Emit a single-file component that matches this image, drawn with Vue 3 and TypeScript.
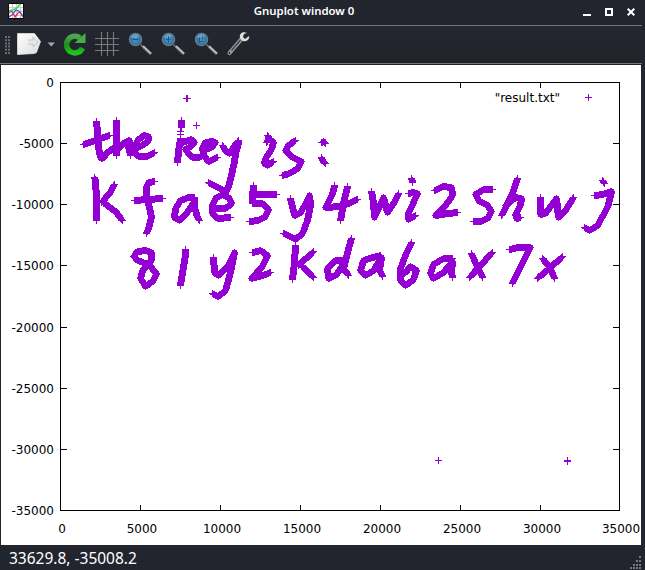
<script setup lang="ts">
type Point = [number, number]

// Pen strokes of the plotted series, in canvas pixels: "x,y x,y ..."
const strokes: string[] = [
  // the
  '96,121 97,132 98,147 100,157 102,158 107,152 115,146',
  '83,144 92,141 100,138 109,135',
  '116,120 116,137 116,155',
  '116,150 124,142 129,140 128,147 130,155',
  '134,148 142,145 148,140 148,136 143,135 137,140 134,147 134,152 138,156 147,156 154,152',
  // key
  '181,120 181,127', '180,131 180,131', '180,134 180,134', '180,138 178,150 177,162',
  '182,142 191,139 194,142 190,146 185,149 188,153 192,157 198,157 203,155',
  '203,149 211,147 215,142 212,141 205,142 202,147 203,155 208,161 217,157',
  '222,145 225,150 229,153 233,147 238,140',
  '238,140 238,143 235,153 234,161 232,170 229,183 226,191 220,188 208,182',
  // is:
  '267,135 269,138', '266,142 268,138 273,142 271,149 265,158 264,163 267,165 273,161',
  '295,140 288,145 285,150 291,156 301,161 297,168 289,173 282,175',
  '321,142 323,141 325,143', '321,157 322,160 325,163',
  // kfae5y4
  '94,177 95,180 96,200 96,220', '114,184 109,193 101,202', '103,202 115,211 122,220',
  '154,181 148,182 146,187 146,198 149,207 151,217 148,228 146,233', '134,200 147,199 162,198',
  '194,197 188,197 180,200 175,208 174,217 179,220 186,213 194,201',
  '194,197 194,207 197,217 199,220',
  '213,208 225,208 231,203 229,198 222,194 215,198 212,205 212,213 217,218 230,217',
  '253,185 252,195 252,203', '254,194 276,194',
  '253,203 262,203 268,209 265,216 257,220 249,221',
  '290,198 292,207 294,215 300,212 306,202 309,195 310,205 307,220 302,233 295,239 290,236 283,233',
  '334,185 332,193 325,207 340,206 348,203 357,199', '347,186 343,202 340,220',
  // wi25hwj
  '371,191 373,203 374,217 383,197 387,212 393,203 398,193',
  '411,178 412,182', '408,193 412,192 417,193 413,202 408,213 408,219 415,215',
  '434,190 442,186 451,187 452,195 445,205 435,215 447,213 457,212',
  '492,189 483,189 475,194 478,200 487,205 491,211 487,218 480,221 473,221',
  '517,178 513,190 507,203 501,215', '505,205 515,197 521,198 520,204 515,214 516,218 520,217',
  '540,197 540,214 545,213 556,198 558,217 565,210 573,197',
  '602,180 604,183', '594,195 602,194 611,191 607,207 597,225 589,230 584,227',
  // 81y2k
  '133,256 137,251 145,250 151,252 151,260 142,270 140,278 145,286 152,281 156,273 148,264 137,260 133,256',
  '185,249 185,254 180,285',
  '213,257 214,272 218,275 227,266 234,252 230,272 225,290 218,296 212,293',
  '252,252 260,250 267,255 261,267 251,278 262,275 270,272',
  '295,245 294,262 292,279', '295,239 295,239', '313,251 298,265', '301,265 313,277',
  // da6
  '351,238 347,252 343,268 348,275', '343,260 335,260 327,268 328,278 336,274 344,262',
  '380,255 372,257 363,260 360,270 365,275 373,270 381,257 379,270 382,276',
  '411,242 405,255 400,268 400,280 405,285 413,279 416,270 410,266 403,274',
  // ax7x
  '452,258 443,258 433,264 430,273 433,278 443,272 452,261 451,272 452,277',
  '471,253 477,267 482,277', '492,252 478,267 469,277',
  '509,249 518,247 530,247 523,260 512,283',
  '542,258 550,268 554,278', '562,256 550,267 537,278',
  // stray samples
  '186,98 187,98', '196,125 196,125', '438,460 438,460', '567,460 567,461',
]

function plus([x, y]: Point): string {
  return `M${x - 3} ${y + 0.5}h7M${x + 0.5} ${y - 3}v7`
}

// Overlapping neighbours of a dense sample fill the middle of its marker
function core([x, y]: Point): string {
  return `M${x - 2} ${y - 1.5}h5M${x - 2} ${y - 0.5}h5M${x - 2} ${y + 1.5}h5M${x - 2} ${y + 2.5}h5`
}

function sample(stroke: string): Point[] {
  const nodes = stroke.split(' ').map((p) => p.split(',').map(Number) as Point)
  const out: Point[] = []
  for (let i = 1; i < nodes.length; i++) {
    const [x0, y0] = nodes[i - 1]
    const [x1, y1] = nodes[i]
    const n = Math.max(1, Math.abs(x1 - x0), Math.abs(y1 - y0))
    for (let k = 0; k <= n; k++) {
      out.push([Math.round(x0 + ((x1 - x0) * k) / n), Math.round(y0 + ((y1 - y0) * k) / n)])
    }
  }
  return out
}

const series = strokes
  .map(sample)
  .map((points) => points.map(plus).join('') + points.slice(2, -2).map(core).join(''))
  .join('')
const key = plus([588, 97])
const xTicks = Array.from({ length: 8 }, (_, i) => ({ label: String(i * 5000), x: Math.min(60.5 + i * 80, 619.5) }))
const yTicks = Array.from({ length: 8 }, (_, i) => ({ label: String(i === 0 ? 0 : -i * 5000), y: 82.5 + Math.round((i * 428) / 7) }))
const grip: Point[] = [[9, 0], [9, 4], [6, 4], [9, 8], [6, 8], [3, 8], [9, 11], [6, 11], [3, 11], [0, 11]]
const lenses = ['M-3 0h6', 'M-2 0h4M0-3v6', 'M-2-2v5M1-3v3M-1 2h3']
</script>

<template>
  <div class="window">
    <header class="titlebar">
      <svg class="app-icon" width="16" height="16" viewBox="0 0 16 16">
        <rect x=".5" y=".5" width="15" height="15" fill="#fff" stroke="#080808" />
        <path d="M4.5 1v14M8.5 1v14M12.5 1v14M1 4.5h14M1 8.5h14M1 12.5h14" stroke="#ccc" />
        <path d="M1 10l2-2 2 2 2 4 3-4 2-1 3 5" fill="none" stroke="#ef3030" stroke-width="1.3" />
        <path d="M1 14l4-3 3-4 3 1 4 5" fill="none" stroke="#4050ef" stroke-width="1.2" />
        <path d="M1 8l4-1 4-2 3-4" fill="none" stroke="#2bdf55" stroke-width="1.4" />
      </svg>
      <h1>Gnuplot window 0</h1>
      <div class="controls">
        <svg width="8" height="10"><path d="M0 9h8" stroke="#fff" stroke-width="2" /></svg>
        <svg width="8" height="10"><rect x="1" y="3" width="6" height="6" fill="none" stroke="#fff" stroke-width="2" /></svg>
        <svg width="8" height="10"><path d="M.7 2.7l6.6 6.6M7.3 2.7L.7 9.3" stroke="#fff" stroke-width="2" /></svg>
      </div>
    </header>

    <nav class="toolbar">
      <svg width="250" height="37" viewBox="0 0 250 37">
        <defs>
          <linearGradient id="page" x1="0" y1="0" x2="1" y2="1">
            <stop offset="0" stop-color="#fff" /><stop offset="1" stop-color="#dcdcdc" />
          </linearGradient>
          <linearGradient id="green" x1="0" y1="0" x2="0" y2="1">
            <stop offset="0" stop-color="#4fa650" /><stop offset=".5" stop-color="#188d1a" /><stop offset="1" stop-color="#20c51b" />
          </linearGradient>
          <radialGradient id="glass">
            <stop offset="0" stop-color="#4f96c8" /><stop offset="1" stop-color="#2d6c9e" />
          </radialGradient>
        </defs>
        <path d="M6 10v18M9 10v18" stroke="#696c72" stroke-width="2" stroke-dasharray="2 1.2" />
        <path d="M17.5 7.5h17l6 8-4 11-2 1-17 1z" fill="url(#page)" stroke="#eee" stroke-width=".7" />
        <path d="M28 14h5v-3l5 5-5 5v-3h-5" fill="#e8e8e8" stroke="#bbb" stroke-width=".8" />
        <path d="M47.5 16.5h7.5l-3.7 4z" fill="#a6a7aa" />
        <path d="M82.5 22a8.300 8.300 0 1 1-2.500-10" fill="none" stroke="url(#green)" stroke-width="5.5" />
        <path d="M85.5 7v10h-11z" fill="#45ae45" />
        <path d="M101.5 6v24M107.5 6v24M113.5 6v24M95 12.5h24M95 18.5h24M95 24.5h24" stroke="#777a7c" stroke-width="1.1" />
        <g v-for="(sign, i) in lenses" :key="i" :transform="`translate(${135.5 + i * 33} 13.5)`">
          <path d="M5 5l3 3" stroke="#777" stroke-width="1.5" />
          <path d="M7.5 7l8 7.5" stroke="#858585" stroke-width="3" />
          <path d="M7.5 6.5l8 7.5" stroke="#c6c6c6" stroke-width="1.2" />
          <circle r="6.2" fill="url(#glass)" stroke="#68808f" stroke-width="1.1" />
          <path d="M-5-2a5 5 0 0 1 9-1q-4 2-9 1" fill="#a1cbe5" opacity=".45" />
          <path :d="sign" stroke="#22547c" stroke-width="1.1" fill="none" />
        </g>
        <path d="M229.5 27l12-14" stroke="#999" stroke-width="4.2" stroke-linecap="round" />
        <path d="M231.5 24.5l9-10.5" stroke="#414246" stroke-width="1.4" />
        <path d="M247 7l-3 1-1 3 2 2 4-3c1 3-2 6-6 5l-3-3c-1-4 2-7 7-5z" fill="#dedede" />
        <circle cx="229.5" cy="27" r=".9" fill="#25272d" />
      </svg>
    </nav>

    <main class="canvas">
      <svg width="640" height="480" viewBox="1 65 640 480">
        <rect class="axis" x="60.5" y="82.5" width="559" height="428" />
        <g v-for="t in xTicks" :key="t.label">
          <path class="axis" :d="`M${t.x} 82v6M${t.x} 511v-6`" />
          <text :x="t.x + 1.5" y="533" text-anchor="middle">{{ t.label }}</text>
        </g>
        <g v-for="t in yTicks" :key="t.label">
          <path class="axis" :d="`M60 ${t.y}h7M620 ${t.y}h-7`" />
          <text x="54" :y="t.y + 4.5" text-anchor="end">{{ t.label }}</text>
        </g>
        <text x="560" y="102" text-anchor="end">"result.txt"</text>
        <path class="points" :d="key" />
        <path class="points" :d="series" />
      </svg>
    </main>

    <footer class="status">
      <span>33629.8, -35008.2</span>
      <svg width="12" height="14">
        <rect v-for="([x, y], i) in grip" :key="i" :x="x" :y="y" width="2" height="2" fill="#777980" />
      </svg>
    </footer>
  </div>
</template>

<style>
body { margin: 0; background: #23252e; }
</style>

<style scoped>
.window { width: 645px; height: 570px; display: flex; flex-direction: column; background: #23252e; color: #fff; overflow: hidden; font-family: "Noto Sans", sans-serif; }
.titlebar { box-sizing: border-box; width: 642px; height: 26px; display: grid; grid-template-columns: 80px 1fr 80px; align-items: center; border-bottom: 1px solid #73757b; padding: 0 7px 3px 8px; }
h1 { margin: 0; padding-right: 35px; font-size: 11.4px; line-height: 20px; font-weight: 600; text-align: center; }
.app-icon { display: block; }
.controls { display: flex; gap: 14px; justify-content: flex-end; }
.controls svg { display: block; }
.toolbar { box-sizing: border-box; width: 642px; height: 38px; border-bottom: 1px solid #73757b; background: linear-gradient(#262831, #20222a); }
.toolbar svg { display: block; }
.canvas { box-sizing: border-box; width: 641px; height: 481px; padding: 1px 0 0 1px; }
.canvas svg { display: block; background: #fff; }
.axis { fill: none; stroke: #000; stroke-width: 1; shape-rendering: crispEdges; }
.points { fill: none; stroke: #9400d3; stroke-width: 1; shape-rendering: crispEdges; }
text { font-family: "DejaVu Sans", sans-serif; font-size: 12px; fill: #000; }
.status { flex: 1; display: flex; align-items: center; justify-content: space-between; padding: 0 3px 0 9px; font-size: 15.5px; line-height: 20px; }
.status svg { align-self: flex-end; }
</style>
